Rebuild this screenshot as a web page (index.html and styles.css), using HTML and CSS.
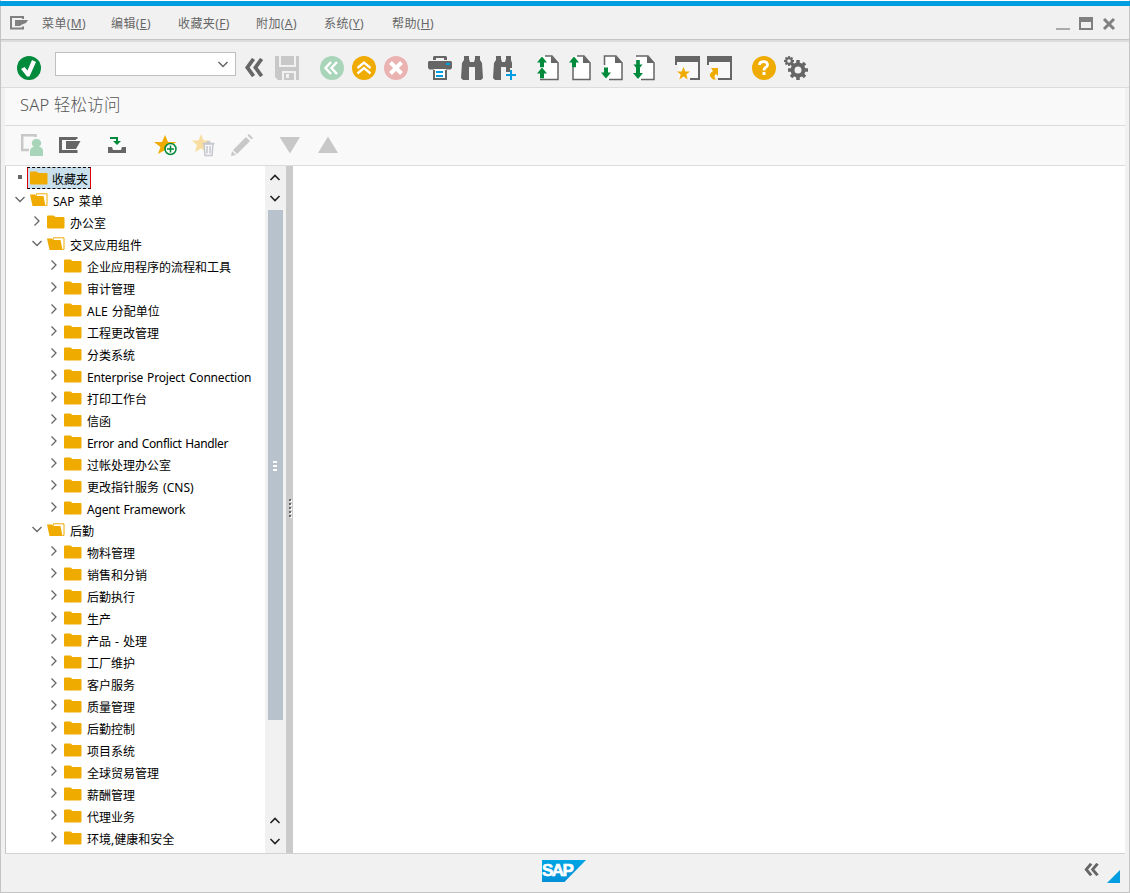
FILE: index.html
```html
<!DOCTYPE html>
<html lang="zh-CN">
<head>
<meta charset="utf-8">
<title>SAP 轻松访问</title>
<link rel="stylesheet" href="styles.css">
</head>
<body>
<svg class="defs" aria-hidden="true">
  <symbol id="closed" viewBox="0 0 18 14"><path fill="#f0ab00" d="M0 1.5Q0 .5 1 .5H6.5L8.5 2H16.5Q17.5 2 17.5 3V12.5Q17.5 13.5 16.5 13.5H1Q0 13.5 0 12.500Z"/></symbol>
  <symbol id="open" viewBox="0 0 18 14"><path fill="#f0ab00" d="M0 1.500H5L6.500 3H13.500L15.500 13H2.500Z"/><path fill="none" stroke="#f0ab00" d="M6.500 2.500V.8H17V12.500H15.500"/></symbol>
  <symbol id="right" viewBox="0 0 12 12"><path fill="none" stroke="#666" stroke-width="1.300" d="M3.500 1.500L8 6L3.500 10.500"/></symbol>
  <symbol id="down" viewBox="0 0 12 12"><path fill="none" stroke="#666" stroke-width="1.300" d="M1.500 4L6 8.500L10.500 4"/></symbol>
  <symbol id="page" viewBox="0 0 24 26"><path fill="#fff" d="M5 1H16L22 8V25H5Z"/><path fill="#666" d="M15 1L22.500 8H15Z"/></symbol>
  <symbol id="arrow" viewBox="0 0 10 11"><path fill="#008a3b" d="M5 0L10 6H7V11H3V6H0Z"/></symbol>
  <symbol id="back2" viewBox="0 0 20 20"><path fill="none" stroke="#666" stroke-width="4" d="M9.500 1L3 10L9.500 19M18 1L11.500 10L18 19"/></symbol>
</svg>
<div class="window">
  <div class="accent"></div>
  <header class="menubar">
    <svg class="menu-icon" viewBox="0 0 18 14"><path fill="none" stroke="#808080" stroke-width="2" d="M13 3V1H1V12.500H13V10.500"/><path fill="#808080" d="M5 4H18L16 7L12 8.500L10 10H5Z"/></svg>
    <nav class="menus">
      <span>菜单(<u>M</u>)</span><span>编辑(<u>E</u>)</span><span>收藏夹(<u>F</u>)</span><span>附加(<u>A</u>)</span><span>系统(<u>Y</u>)</span><span>帮助(<u>H</u>)</span>
    </nav>
    <svg class="controls" viewBox="0 0 60 16"><path fill="#aaa" d="M0 12H14V14H0Z"/><path fill="#808080" fill-rule="evenodd" d="M23 1H37V14H23ZM25 6V12H35V6Z"/><path fill="none" stroke="#808080" stroke-width="3" d="M48 3L58 13M58 3L48 13"/></svg>
  </header>
  <div class="toolbar">
    <svg class="ic" viewBox="0 0 24 24"><circle cx="12" cy="12" r="12" fill="#008a3b"/><path fill="#fff" d="M4 13L7.500 11L10.500 14.500L15 4L19 6L12.500 20.500H10Z"/></svg>
    <div class="command"><svg viewBox="0 0 12 12"><path fill="none" stroke="#666" stroke-width="1.500" d="M1.500 4L6 8.500L10.500 4"/></svg></div>
    <div class="group">
      <svg class="ic" viewBox="0 0 24 24"><use href="#back2" x="0" y="2" width="20" height="19"/></svg>
      <svg class="ic" viewBox="0 0 24 24"><path fill="#c8c8c8" d="M-1 0H3V11H20V0H23V24H20V15H6V24H2L-1 21Z"/><path fill="#c8c8c8" d="M5 0H18V9H5ZM8 17H18V24H8Z"/><path fill="#f1f1f1" d="M10 18H13V22H10Z"/></svg>
    </div>
    <div class="group nav">
      <svg class="ic" viewBox="0 0 24 24"><circle cx="12" cy="12" r="12" fill="#a8d5ba"/><path fill="none" stroke="#fff" stroke-width="2.500" d="M11 6L5.500 12L11 18M17 6L11.500 12L17 18"/></svg>
      <svg class="ic" viewBox="0 0 24 24"><circle cx="12" cy="12" r="12" fill="#f0ab00"/><path fill="none" stroke="#fff" stroke-width="2.300" d="M5.500 12L12 6.500L18.500 12M5.500 17.500L12 12L18.500 17.500"/></svg>
      <svg class="ic" viewBox="0 0 24 24"><circle cx="12" cy="12" r="12" fill="#ebb2b2"/><path fill="none" stroke="#fff" stroke-width="4" d="M6.500 6.500L17.500 17.500M17.500 6.500L6.500 17.500"/></svg>
    </div>
    <div class="group print">
      <svg class="ic" viewBox="0 0 24 24"><path fill="#666" fill-rule="evenodd" d="M6 0H18L19 1V4H16V2H8V4H5V1ZM1 5H23L24 6V12L22.500 13.500H1.500L0 12V6Z"/><path fill="#fff" d="M6 13H18V23H6Z"/><path fill="none" stroke="#666" stroke-width="2" d="M6 14V23H18V14"/><path fill="#009de0" d="M18 7H22V9H18ZM8 15H15V17H8ZM8 19H15V21H8Z"/></svg>
      <svg class="ic" viewBox="0 0 24 24"><path fill="#666" d="M4 0H9V3L10 6H14L15 3V0H20V4L22 7L23 22L21 24H15V11H9V24H3L1 22L2 7L4 4Z"/></svg>
      <svg class="ic" viewBox="0 0 24 24"><path fill="#666" d="M4 0H9V3L10 6H13L14 3V0H19V4L20 7V12H18V16H14V11H9V24H3L1 22L2 7L4 4Z"/><path fill="#009de0" d="M18 14H20V18H24V20H20V24H18V20H14V18H18Z"/></svg>
    </div>
    <div class="group pages">
      <svg class="ic" viewBox="0 1 24 24"><use href="#page" width="24" height="26"/><path fill="none" stroke="#666" stroke-width="1.500" d="M9 1H16L22 8V24.500H4"/><use href="#arrow" x="1" y="1.500" width="10" height="11"/><use href="#arrow" x="1" y="12.500" width="10" height="11"/></svg>
      <svg class="ic" viewBox="0 1 24 24"><use href="#page" width="24" height="26"/><path fill="none" stroke="#666" stroke-width="1.500" d="M9 1H16L22 8V24.500H5V11"/><use href="#arrow" x="1" y="1.500" width="10" height="11"/></svg>
      <svg class="ic" viewBox="0 1 24 24"><use href="#page" width="24" height="26"/><path fill="none" stroke="#666" stroke-width="1.500" d="M4.500 10V1H16L22 8V24.500H9"/><use href="#arrow" transform="rotate(180 6 18)" x="1" y="12" width="10" height="12"/></svg>
      <svg class="ic" viewBox="0 1 24 24"><use href="#page" width="24" height="26"/><path fill="none" stroke="#666" stroke-width="1.500" d="M4 1H16L22 8V24.500H9"/><use href="#arrow" transform="rotate(180 6 9)" x="1" y="3" width="10" height="10"/><use href="#arrow" transform="rotate(180 6 18)" x="1" y="12" width="10" height="11"/></svg>
    </div>
    <div class="group views">
      <svg class="ic" viewBox="0 0 24 24"><path fill="#666" d="M0 0H25V24H15V22H23V6H2V9H0Z"/><path fill="#f8f8f8" d="M2 6H23V22H2Z"/><path fill="#f1f1f1" d="M0 9H3V24H0ZM0 22H15V24H0Z"/><path fill="#f0ab00" d="M8.500 11L10.300 15.500H15L11.300 18.500L12.700 23.500L8.500 20.500L4.300 23.500L5.700 18.500L2 15.500H6.700Z"/></svg>
      <svg class="ic" viewBox="0 0 24 24"><path fill="#666" d="M0 0H25V24H11V22H23V6H2V9H0Z"/><path fill="#f8f8f8" d="M2 6H23V22H2Z"/><path fill="#f1f1f1" d="M0 9H3V24H0ZM0 22H11V24H0Z"/><path fill="#f0ab00" d="M4 12H11V20L9 18Q6 20.500 9 23.500H6Q-.5 19 6 15Z"/></svg>
    </div>
    <div class="group help">
      <svg class="ic" viewBox="0 0 24 24"><circle cx="12" cy="12" r="12" fill="#f0ab00"/><path fill="none" stroke="#fff" stroke-width="2.800" d="M7.500 9Q7.500 5.700 11.500 5.700Q15.500 5.700 15.500 9Q15.500 10.500 13.500 11.500Q12 12.500 12 14.500"/><path fill="#fff" d="M10.500 16H13.500V19H10.500Z"/></svg>
      <svg class="ic" viewBox="0 0 24 24"><g fill="none" stroke="#666"><circle cx="14" cy="14" r="5.500" stroke-width="4"/><path stroke-width="3.500" d="M14 4V8M14 20V24M4 14H8M20 14H24M7 7L10 10M18 18L21 21M21 7L18 10M10 18L7 21"/><circle cx="5" cy="5" r="2.800" stroke-width="2"/><path stroke-width="1.800" d="M5 0V2M5 8V10M0 5H2M8 5H10M1.500 1.500L3 3M7 7L8.500 8.500M8.500 1.500L7 3M1.500 8.500L3 7"/></g></svg>
    </div>
  </div>
  <h1 class="title">SAP 轻松访问</h1>
  <div class="apptools">
    <div class="group">
      <svg class="ic" viewBox="0 0 24 24"><path fill="none" stroke="#c8c8c8" stroke-width="2.500" d="M15.500 4V2.200H2.200V17H9"/><path fill="#a8d5ba" d="M16.500 6A4 4 0 0 1 19 13.500Q23 14.500 23 18V23H10V18Q10 14.500 14 13.500A4 4 0 0 1 16.500 6Z"/></svg>
      <svg class="ic" viewBox="0 0 24 24"><path fill="none" stroke="#666" stroke-width="3" d="M18 6V5.500H2.500V18.500H18V17"/><path fill="#666" d="M8 8H22.500L18 16H8Z"/></svg>
    </div>
    <svg class="ic import" viewBox="0 0 24 24"><path fill="#666" d="M3 14H7L8 17H16L17 14H21V20H3Z"/><path fill="#008a3b" d="M5 4H13V8H16L12 12L8 8H11V6H5Z"/></svg>
    <div class="group fav">
      <svg class="ic" viewBox="0 0 24 24"><path fill="#f0ab00" d="M11 2L14 9H22L15.500 14L18 21L11 17L4 21L6.500 14L0 9H8Z"/><circle cx="16.500" cy="16" r="5.500" fill="#f9f9f9" stroke="#008a3b" stroke-width="1.500"/><path stroke="#008a3b" stroke-width="1.500" d="M13 16H20M16.500 12.500V19.500"/></svg>
      <svg class="ic" viewBox="0 0 24 24"><path fill="#f9dda0" d="M9 1L11.500 7.500H18L13 12L15 19L9 15.500L3 19L5 12L0 7.500H6.500Z"/><path fill="#f9f9f9" stroke="#c5c8ce" stroke-width="1.500" d="M12 11H21L20 22.500H13Z"/><path stroke="#c5c8ce" stroke-width="1.500" d="M10.500 10.500H22.500M14.500 9H18.500M15 13V20.500M18 13V20.500"/></svg>
      <svg class="ic" viewBox="0 0 24 24"><path fill="#c8c8c8" d="M16 4L20 8L7 21L3 17ZM17.500 2.500L19 1L23 5L21.500 6.500ZM2 18L6 22L1 23Z"/></svg>
    </div>
    <div class="group move">
      <svg class="ic" viewBox="0 0 24 24"><path fill="#c8c8c8" d="M1.500 4H22L12 20.500Z"/></svg>
      <svg class="ic" viewBox="0 0 24 24"><path fill="#c8c8c8" d="M12 3.500L22 20H2Z"/></svg>
    </div>
  </div>
  <main class="body">
    <ul class="tree">
      <li class="l1 selected"><i class="dot"></i><span class="pick"><svg class="fo"><use href="#closed"/></svg><b>收藏夹</b></span></li>
      <li class="l1"><svg class="ar"><use href="#down"/></svg><svg class="fo"><use href="#open"/></svg><b>SAP 菜单</b></li>
      <li class="l2"><svg class="ar"><use href="#right"/></svg><svg class="fo"><use href="#closed"/></svg><b>办公室</b></li>
      <li class="l2"><svg class="ar"><use href="#down"/></svg><svg class="fo"><use href="#open"/></svg><b>交叉应用组件</b></li>
      <li class="l3"><svg class="ar"><use href="#right"/></svg><svg class="fo"><use href="#closed"/></svg><b>企业应用程序的流程和工具</b></li>
      <li class="l3"><svg class="ar"><use href="#right"/></svg><svg class="fo"><use href="#closed"/></svg><b>审计管理</b></li>
      <li class="l3"><svg class="ar"><use href="#right"/></svg><svg class="fo"><use href="#closed"/></svg><b>ALE 分配单位</b></li>
      <li class="l3"><svg class="ar"><use href="#right"/></svg><svg class="fo"><use href="#closed"/></svg><b>工程更改管理</b></li>
      <li class="l3"><svg class="ar"><use href="#right"/></svg><svg class="fo"><use href="#closed"/></svg><b>分类系统</b></li>
      <li class="l3"><svg class="ar"><use href="#right"/></svg><svg class="fo"><use href="#closed"/></svg><b class="latin">Enterprise Project Connection</b></li>
      <li class="l3"><svg class="ar"><use href="#right"/></svg><svg class="fo"><use href="#closed"/></svg><b>打印工作台</b></li>
      <li class="l3"><svg class="ar"><use href="#right"/></svg><svg class="fo"><use href="#closed"/></svg><b>信函</b></li>
      <li class="l3"><svg class="ar"><use href="#right"/></svg><svg class="fo"><use href="#closed"/></svg><b class="latin tight">Error and Conflict Handler</b></li>
      <li class="l3"><svg class="ar"><use href="#right"/></svg><svg class="fo"><use href="#closed"/></svg><b>过帐处理办公室</b></li>
      <li class="l3"><svg class="ar"><use href="#right"/></svg><svg class="fo"><use href="#closed"/></svg><b>更改指针服务 (CNS)</b></li>
      <li class="l3"><svg class="ar"><use href="#right"/></svg><svg class="fo"><use href="#closed"/></svg><b class="latin">Agent Framework</b></li>
      <li class="l2"><svg class="ar"><use href="#down"/></svg><svg class="fo"><use href="#open"/></svg><b>后勤</b></li>
      <li class="l3"><svg class="ar"><use href="#right"/></svg><svg class="fo"><use href="#closed"/></svg><b>物料管理</b></li>
      <li class="l3"><svg class="ar"><use href="#right"/></svg><svg class="fo"><use href="#closed"/></svg><b>销售和分销</b></li>
      <li class="l3"><svg class="ar"><use href="#right"/></svg><svg class="fo"><use href="#closed"/></svg><b>后勤执行</b></li>
      <li class="l3"><svg class="ar"><use href="#right"/></svg><svg class="fo"><use href="#closed"/></svg><b>生产</b></li>
      <li class="l3"><svg class="ar"><use href="#right"/></svg><svg class="fo"><use href="#closed"/></svg><b>产品 - 处理</b></li>
      <li class="l3"><svg class="ar"><use href="#right"/></svg><svg class="fo"><use href="#closed"/></svg><b>工厂维护</b></li>
      <li class="l3"><svg class="ar"><use href="#right"/></svg><svg class="fo"><use href="#closed"/></svg><b>客户服务</b></li>
      <li class="l3"><svg class="ar"><use href="#right"/></svg><svg class="fo"><use href="#closed"/></svg><b>质量管理</b></li>
      <li class="l3"><svg class="ar"><use href="#right"/></svg><svg class="fo"><use href="#closed"/></svg><b>后勤控制</b></li>
      <li class="l3"><svg class="ar"><use href="#right"/></svg><svg class="fo"><use href="#closed"/></svg><b>项目系统</b></li>
      <li class="l3"><svg class="ar"><use href="#right"/></svg><svg class="fo"><use href="#closed"/></svg><b>全球贸易管理</b></li>
      <li class="l3"><svg class="ar"><use href="#right"/></svg><svg class="fo"><use href="#closed"/></svg><b>薪酬管理</b></li>
      <li class="l3"><svg class="ar"><use href="#right"/></svg><svg class="fo"><use href="#closed"/></svg><b>代理业务</b></li>
      <li class="l3"><svg class="ar"><use href="#right"/></svg><svg class="fo"><use href="#closed"/></svg><b>环境,健康和安全</b></li>
    </ul>
    <div class="scroll">
      <svg class="step" viewBox="0 0 12 21"><path d="M1.500 13L6 8.500L10.500 13"/></svg>
      <svg class="step" viewBox="0 0 12 21"><path d="M1.500 8L6 12.500L10.500 8"/></svg>
      <div class="thumb"><i></i><i></i><i></i></div>
      <div class="rest"></div>
      <svg class="step" viewBox="0 0 12 21"><path d="M1.500 13L6 8.500L10.500 13"/></svg>
      <svg class="step" viewBox="0 0 12 21"><path d="M1.500 8L6 12.500L10.500 8"/></svg>
    </div>
    <div class="splitter"><i></i><i></i><i></i><i></i><i></i></div>
    <section class="canvas"></section>
  </main>
  <footer class="status">
    <div class="logo"><span>SAP</span></div>
    <svg class="collapse" viewBox="0 0 20 20" preserveAspectRatio="none"><use href="#back2" width="20" height="20"/></svg>
    <div class="grip"></div>
  </footer>
</div>
</body>
</html>
```
FILE: styles.css
```css
* { box-sizing: border-box; }
body { margin: 0; background: #fff; font-family: "Noto Sans", "Noto Sans CJK SC", sans-serif; font-size: 12px; }
svg { display: block; flex: none; overflow: visible; }
.defs { position: absolute; width: 0; height: 0; }
.window { display: flex; flex-direction: column; height: 893px; width: 1130px; padding-top: 1px; border: solid #c4c4c4; border-width: 0 1px 1px; background: linear-gradient(#fff 1px, #f1f1f1 1px); }
.accent { height: 5px; margin: 0 -1px; background: #009de0; flex: none; }
.menubar { display: flex; align-items: center; height: 36px; flex: none; padding: 0 14px 0 9px; border-bottom: 1px solid #dcdcdc; box-shadow: inset 0 -1px #dcdcdc, inset 0 -2px #c4c4c4; }
.menu-icon { width: 18px; height: 14px; margin-top: -2px; }
.menus { display: grid; grid-template-columns: 69px 67px 78px 68px 68px auto; margin: 1px auto 0 14px; color: #666; line-height: 18px; white-space: nowrap; letter-spacing: .4px; }
.menus u { text-underline-offset: 1px; }
.controls { width: 60px; height: 16px; margin-right: -1px; }
.toolbar { display: flex; align-items: center; height: 46px; flex: none; padding: 7px 0 0 16px; border-bottom: 1px solid #dcdcdc; }
.ic { width: 24px; height: 24px; }
.group { display: flex; gap: 8px; }
.command { width: 181px; height: 24px; margin: -8px 8px 0 14px; border: 1px solid #bfbfbf; background: #fff; display: flex; justify-content: flex-end; align-items: center; padding-right: 6px; }
.command svg { width: 12px; height: 12px; }
.nav, .print, .pages { margin-left: 20px; }
.views { margin-left: 19px; }
.help { margin-left: 21px; }
.title { height: 38px; flex: none; margin: 0 4px; padding: 0 0 2px 15px; background: #f9f9f9; border-bottom: 1px solid #dcdcdc; font-size: 16.500px; font-weight: 300; line-height: 34px; letter-spacing: .2px; color: #555; }
.apptools { display: flex; align-items: center; height: 40px; flex: none; margin: 0 4px; padding: 0 0 2px 15px; background: #f9f9f9; border-bottom: 1px solid #dcdcdc; }
.apptools .group { gap: 14px; }
.import { margin-left: 23px; }
.fav { margin-left: 25px; }
.move { margin-left: 24px; }
.body { display: flex; flex: 1; min-height: 0; margin: 0 4px; border-bottom: 1px solid #d2d2d2; background: #fff; }
.tree { width: 260px; margin: 0; padding: 1px 0 0 9px; list-style: none; border-left: 1px solid #c4c4c4; }
.tree li { display: flex; align-items: center; height: 22px; white-space: nowrap; }
.tree b { font-weight: 400; color: #000; line-height: 21px; padding-top: 3px; word-spacing: 1px; }
.tree .latin { padding-top: 2px; letter-spacing: -.19px; }
.tree .tight { letter-spacing: -.36px; }
.l2 { padding-left: 17px; }
.l3 { padding-left: 34px; }
.ar { width: 12px; height: 12px; margin: -3px 4px 0 -1px; }
.fo { width: 18px; height: 14px; margin-right: 5px; }
.dot { width: 4px; height: 4px; margin: -3px 5px 0 3px; background: #666; }
.pick { display: flex; align-items: center; width: 64px; height: 22px; padding-left: 2px; background: #c9e0ec; border: 1px dashed #000; border-left: 1px solid #e00000; border-right: 1px solid #e00000; }
.pick .fo { margin-right: 4px; }
.scroll { display: flex; flex-direction: column; align-items: flex-start; width: 21px; background: #f1f1f1; padding: 1px 0 1px 3px; }
.step { width: 12px; height: 21px; margin: -.5px 0 .5px 1px; fill: none; stroke: #222; stroke-width: 1.600; }
.thumb { display: flex; flex-direction: column; align-items: center; justify-content: center; gap: 2px; width: 15px; height: 510px; margin-top: 1px; padding: 1px 1px 0 0; background: #b7c2cd; }
.thumb i { width: 4px; height: 2px; background: #fff; }
.rest { flex: 1; }
.splitter { display: flex; flex-direction: column; align-items: center; justify-content: center; gap: 2px; width: 7px; padding-bottom: 4px; background: #cbcbcb; }
.splitter i { width: 2px; height: 2px; background: #666; box-shadow: 1px 1px #fff; }
.canvas { flex: 1; }
.status { display: flex; align-items: flex-start; height: 38px; flex: none; padding: 6px 9px 0 541px; }
.logo { width: 44px; height: 22px; background: linear-gradient(#00a5e3, #0090d8); clip-path: polygon(0 0, 100% 0, 51% 100%, 0 100%); color: #fff; font: 700 17px/22px "Liberation Sans", sans-serif; letter-spacing: -1.500px; -webkit-text-stroke: .6px #fff; }
.collapse { width: 15px; height: 13px; margin: 3px 8px 0 auto; }
.grip { width: 13px; height: 13px; margin-top: 10px; background: #009de0; clip-path: polygon(100% 0, 100% 100%, 0 100%); }
```
